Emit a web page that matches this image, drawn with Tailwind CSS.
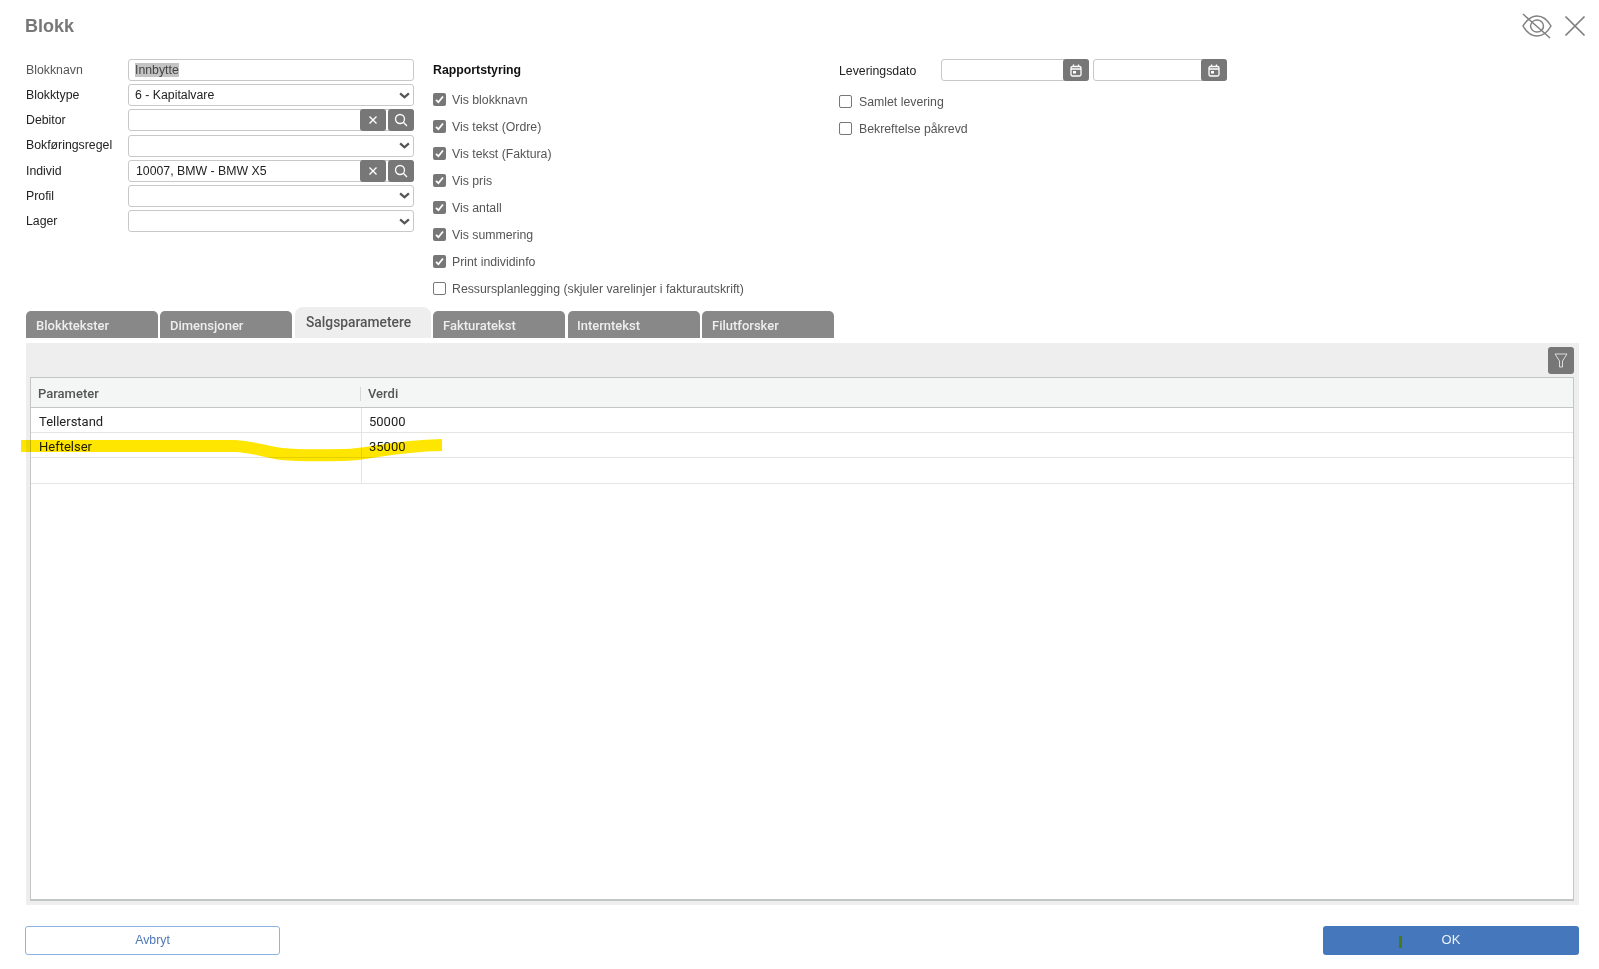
<!DOCTYPE html>
<html lang="no">
<head>
<meta charset="utf-8">
<title>Blokk</title>
<script src="https://cdn.jsdelivr.net/npm/@tailwindcss/browser@4"></script>
</head>
<body class="bg-white">
<div class="relative w-[1599px] h-[969px] overflow-hidden bg-white font-['Liberation_Sans',Arial,sans-serif] text-[12.3px] text-[#333]">

  <!-- Title bar -->
  <div class="h-[59px] pl-[25px] pr-[13px] flex items-start justify-between">
    <h1 class="mt-[15px] text-[18px] leading-[22px] font-bold text-[#777]">Blokk</h1>
    <div class="flex items-center gap-[11px] mt-[13px]">
      <svg class="w-[32px] h-[26px]" viewBox="0 0 32 26" fill="none" stroke="#808080" stroke-width="1.5">
        <path d="M2 13 C7 5 12 3 16 3 C21 3 26 6 30 13 C26 20 21 23 16 23 C11 23 6 20 2 13 Z"/>
        <path d="M9.5 13 C10 9 13 7 16 7 C19.5 7 22.5 9.5 22.5 13 C22.5 16.5 19.5 19 16 19 C13 19 10 17 9.5 13 Z"/>
        <path d="M2 1 L29 25"/>
      </svg>
      <svg class="w-[22px] h-[22px]" viewBox="0 0 22 22" fill="none" stroke="#7d7d7d" stroke-width="1.7">
        <path d="M1.500 1.500 L20.500 20.500 M20.500 1.500 L1.500 20.500"/>
      </svg>
    </div>
  </div>

  <!-- Form -->
  <div class="h-[248px] pl-[26px] flex items-start">
    <div class="w-[388px] flex flex-col gap-[3.2px]">
      <div class="flex items-center h-[22px]">
        <label class="w-[102px] text-[#555]">Blokknavn</label>
        <div class="flex-1 h-[22px] border border-[#c8c8c8] rounded-[3px] flex items-center pl-[6px]"><span class="bg-[#c4c4c4] text-[#444] leading-[14px]">Innbytte</span></div>
      </div>
      <div class="flex items-center h-[22px]">
        <label class="w-[102px] text-[#222]">Blokktype</label>
        <div class="flex-1 h-[22px] border border-[#c8c8c8] rounded-[3px] flex items-center justify-between pl-[6px] pr-[3px] text-[#222]"><span>6 - Kapitalvare</span>
          <svg class="w-[11px] h-[7px]" viewBox="0 0 12 8" fill="none" stroke="#555" stroke-width="2.6"><path d="M1 1.500 L6 6 L11 1.500"/></svg></div>
      </div>
      <div class="flex items-center h-[22px]">
        <label class="w-[102px] text-[#222]">Debitor</label>
        <div class="flex-1 h-[22px] border border-[#c8c8c8] rounded-[3px] flex justify-end gap-[2px]">
          <button class="w-[26px] h-[22px] -my-[1px] bg-[#777] rounded-[3px] flex items-center justify-center"><svg class="w-[10px] h-[10px]" viewBox="0 0 10 10" fill="none" stroke="#fff" stroke-width="1.4"><path d="M1.500 1.500 L8.500 8.500 M8.500 1.500 L1.500 8.500"/></svg></button>
          <button class="w-[26px] h-[22px] -my-[1px] -mr-[1px] bg-[#777] rounded-[3px] flex items-center justify-center"><svg class="w-[14px] h-[14px]" viewBox="0 0 14 14" fill="none" stroke="#fff" stroke-width="1.3"><circle cx="6" cy="6" r="4.500"/><path d="M9.300 9.300 L13 13"/></svg></button>
        </div>
      </div>
      <div class="flex items-center h-[22px]">
        <label class="w-[102px] text-[#222]">Bokføringsregel</label>
        <div class="flex-1 h-[22px] border border-[#c8c8c8] rounded-[3px] flex items-center justify-end pr-[3px]">
          <svg class="w-[11px] h-[7px]" viewBox="0 0 12 8" fill="none" stroke="#555" stroke-width="2.6"><path d="M1 1.500 L6 6 L11 1.500"/></svg></div>
      </div>
      <div class="flex items-center h-[22px]">
        <label class="w-[102px] text-[#222]">Individ</label>
        <div class="flex-1 h-[22px] border border-[#c8c8c8] rounded-[3px] flex items-center justify-between pl-[7px] text-[#222]">
          <span>10007, BMW - BMW X5</span>
          <div class="flex gap-[2px]">
            <button class="w-[26px] h-[22px] -my-[1px] bg-[#777] rounded-[3px] flex items-center justify-center"><svg class="w-[10px] h-[10px]" viewBox="0 0 10 10" fill="none" stroke="#fff" stroke-width="1.4"><path d="M1.500 1.500 L8.500 8.500 M8.500 1.500 L1.500 8.500"/></svg></button>
            <button class="w-[26px] h-[22px] -my-[1px] -mr-[1px] bg-[#777] rounded-[3px] flex items-center justify-center"><svg class="w-[14px] h-[14px]" viewBox="0 0 14 14" fill="none" stroke="#fff" stroke-width="1.3"><circle cx="6" cy="6" r="4.500"/><path d="M9.300 9.300 L13 13"/></svg></button>
          </div>
        </div>
      </div>
      <div class="flex items-center h-[22px]">
        <label class="w-[102px] text-[#222]">Profil</label>
        <div class="flex-1 h-[22px] border border-[#c8c8c8] rounded-[3px] flex items-center justify-end pr-[3px]">
          <svg class="w-[11px] h-[7px]" viewBox="0 0 12 8" fill="none" stroke="#555" stroke-width="2.6"><path d="M1 1.500 L6 6 L11 1.500"/></svg></div>
      </div>
      <div class="flex items-center h-[22px]">
        <label class="w-[102px] text-[#222]">Lager</label>
        <div class="flex-1 h-[22px] border border-[#c8c8c8] rounded-[3px] flex items-center justify-end pr-[3px]">
          <svg class="w-[11px] h-[7px]" viewBox="0 0 12 8" fill="none" stroke="#555" stroke-width="2.6"><path d="M1 1.500 L6 6 L11 1.500"/></svg></div>
      </div>
    </div>

    <div class="ml-[19px] w-[406px] flex flex-col text-[#555]">
      <div class="h-[26px] flex items-center font-bold text-[#111] -mt-[2px] mb-[3px]">Rapportstyring</div>
      <div class="flex flex-col">
        <div class="h-[27px] flex items-center gap-[6px] pt-[1px]"><span class="w-[13px] h-[13px] -mt-[2px] bg-[#777] rounded-[2px] flex items-center justify-center"><svg class="w-[9px] h-[9px]" viewBox="0 0 9 9" fill="none" stroke="#fff" stroke-width="1.8"><path d="M1 4.800 L3.400 7.200 L8 1.500"/></svg></span>Vis blokknavn</div>
        <div class="h-[27px] flex items-center gap-[6px] pt-[1px]"><span class="w-[13px] h-[13px] -mt-[2px] bg-[#777] rounded-[2px] flex items-center justify-center"><svg class="w-[9px] h-[9px]" viewBox="0 0 9 9" fill="none" stroke="#fff" stroke-width="1.8"><path d="M1 4.800 L3.400 7.200 L8 1.500"/></svg></span>Vis tekst (Ordre)</div>
        <div class="h-[27px] flex items-center gap-[6px] pt-[1px]"><span class="w-[13px] h-[13px] -mt-[2px] bg-[#777] rounded-[2px] flex items-center justify-center"><svg class="w-[9px] h-[9px]" viewBox="0 0 9 9" fill="none" stroke="#fff" stroke-width="1.8"><path d="M1 4.800 L3.400 7.200 L8 1.500"/></svg></span>Vis tekst (Faktura)</div>
        <div class="h-[27px] flex items-center gap-[6px] pt-[1px]"><span class="w-[13px] h-[13px] -mt-[2px] bg-[#777] rounded-[2px] flex items-center justify-center"><svg class="w-[9px] h-[9px]" viewBox="0 0 9 9" fill="none" stroke="#fff" stroke-width="1.8"><path d="M1 4.800 L3.400 7.200 L8 1.500"/></svg></span>Vis pris</div>
        <div class="h-[27px] flex items-center gap-[6px] pt-[1px]"><span class="w-[13px] h-[13px] -mt-[2px] bg-[#777] rounded-[2px] flex items-center justify-center"><svg class="w-[9px] h-[9px]" viewBox="0 0 9 9" fill="none" stroke="#fff" stroke-width="1.8"><path d="M1 4.800 L3.400 7.200 L8 1.500"/></svg></span>Vis antall</div>
        <div class="h-[27px] flex items-center gap-[6px] pt-[1px]"><span class="w-[13px] h-[13px] -mt-[2px] bg-[#777] rounded-[2px] flex items-center justify-center"><svg class="w-[9px] h-[9px]" viewBox="0 0 9 9" fill="none" stroke="#fff" stroke-width="1.8"><path d="M1 4.800 L3.400 7.200 L8 1.500"/></svg></span>Vis summering</div>
        <div class="h-[27px] flex items-center gap-[6px] pt-[1px]"><span class="w-[13px] h-[13px] -mt-[2px] bg-[#777] rounded-[2px] flex items-center justify-center"><svg class="w-[9px] h-[9px]" viewBox="0 0 9 9" fill="none" stroke="#fff" stroke-width="1.8"><path d="M1 4.800 L3.400 7.200 L8 1.500"/></svg></span>Print individinfo</div>
        <div class="h-[27px] flex items-center gap-[6px] pt-[1px]"><span class="w-[13px] h-[13px] -mt-[2px] border border-[#777] rounded-[2px]"></span>Ressursplanlegging (skjuler varelinjer i fakturautskrift)</div>
      </div>
    </div>

    <div class="flex flex-col text-[#555]">
      <div class="flex items-center h-[22px]">
        <label class="w-[102px] text-[#222] pt-[2px]">Leveringsdato</label>
        <div class="w-[148px] h-[22px] border border-[#c8c8c8] rounded-[3px] flex justify-end">
          <button class="w-[26px] h-[22px] -m-[1px] bg-[#777] rounded-[3px] flex items-center justify-center"><svg class="w-[12px] h-[13px]" viewBox="0 0 12 13" fill="none" stroke="#fff" stroke-width="1.3"><rect x="1" y="2.500" width="10" height="9.500" rx="1.500"/><path d="M1 5 H11 M3.500 0.500 V3 M8.500 0.500 V3"/><rect x="3" y="7" width="3" height="2.500" fill="#fff" stroke="none"/></svg></button>
        </div>
        <div class="ml-[4px] w-[134px] h-[22px] border border-[#c8c8c8] rounded-[3px] flex justify-end">
          <button class="w-[26px] h-[22px] -m-[1px] bg-[#777] rounded-[3px] flex items-center justify-center"><svg class="w-[12px] h-[13px]" viewBox="0 0 12 13" fill="none" stroke="#fff" stroke-width="1.3"><rect x="1" y="2.500" width="10" height="9.500" rx="1.500"/><path d="M1 5 H11 M3.500 0.500 V3 M8.500 0.500 V3"/><rect x="3" y="7" width="3" height="2.500" fill="#fff" stroke="none"/></svg></button>
        </div>
      </div>
      <div class="h-[27px] flex items-center gap-[7px] mt-[7px] pt-[1px]"><span class="w-[13px] h-[13px] -mt-[2px] border border-[#777] rounded-[2px]"></span>Samlet levering</div>
      <div class="h-[27px] flex items-center gap-[7px] pt-[1px]"><span class="w-[13px] h-[13px] -mt-[2px] border border-[#777] rounded-[2px]"></span>Bekreftelse påkrevd</div>
    </div>
  </div>

  <!-- Tabs -->
  <div class="h-[31px] pl-[26px] flex items-end font-['Roboto',sans-serif] text-[13px] font-medium text-[#eee]">
    <div class="w-[132px] h-[27px] bg-[#888] rounded-t-[5px] flex items-center pl-[10px] pt-[2px]">Blokktekster</div>
    <div class="ml-[2px] w-[132px] h-[27px] bg-[#888] rounded-t-[5px] flex items-center pl-[10px] pt-[2px]">Dimensjoner</div>
    <div class="ml-[3px] w-[136px] h-[31px] bg-[#eee] rounded-t-[8px] flex items-start pt-[5px] pl-[11px] text-[#555] text-[13.8px]">Salgsparametere</div>
    <div class="ml-[2px] w-[132px] h-[27px] bg-[#888] rounded-t-[5px] flex items-center pl-[10px] pt-[2px]">Fakturatekst</div>
    <div class="ml-[3px] w-[132px] h-[27px] bg-[#888] rounded-t-[5px] flex items-center pl-[9px] pt-[2px]">Interntekst</div>
    <div class="ml-[2px] w-[132px] h-[27px] bg-[#888] rounded-t-[5px] flex items-center pl-[10px] pt-[2px]">Filutforsker</div>
  </div>

  <!-- Panel -->
  <div class="mt-[5px] ml-[26px] w-[1553px] h-[562px] bg-[#eee] pl-[4px] pr-[5px] pb-[4px] flex flex-col">
    <div class="h-[34px] flex items-start justify-end pt-[4px] shrink-0">
      <button class="w-[26px] h-[27px] bg-[#777] rounded-[3px] flex items-center justify-center">
        <svg class="w-[14px] h-[15px]" viewBox="0 0 14 15" fill="none" stroke="#ddd" stroke-width="1"><path d="M1 1 H13 L8.500 8 V14 H5.500 V8 Z"/></svg>
      </button>
    </div>
    <div class="flex-1 bg-white border-2 border-[#c3c6c6] border-t border-l border-r flex flex-col font-['Roboto',sans-serif] text-[13px]">
      <div class="h-[30px] bg-[#f4f6f5] border-b border-[#c3c6c6] flex items-center font-medium text-[#555] shrink-0 pt-[2px]">
        <div class="w-[330px] pl-[7px] h-[14px] flex items-center border-r border-[#d8d8d8]">Parameter</div>
        <div class="pl-[7px]">Verdi</div>
      </div>
      <div class="h-[25px] border-b border-[#e4e6e6] flex text-[#222]">
        <div class="w-[331px] pl-[8px] pt-[4px] border-r border-[#e4e6e6] flex items-center">Tellerstand</div>
        <div class="pl-[7px] pt-[4px] flex items-center">50000</div>
      </div>
      <div class="h-[25px] border-b border-[#e4e6e6] flex text-[#222]">
        <div class="w-[331px] pl-[8px] pt-[4px] border-r border-[#e4e6e6] flex items-center">Heftelser</div>
        <div class="pl-[7px] pt-[4px] flex items-center">35000</div>
      </div>
      <div class="h-[26px] border-b border-[#e4e6e6] flex">
        <div class="w-[331px] border-r border-[#e4e6e6]"></div>
      </div>
    </div>
  </div>

  <!-- Footer -->
  <div class="mt-[21px] pl-[25px] pr-[20px] flex justify-between">
    <button class="w-[255px] h-[29px] border border-[#8fb2e6] rounded-[3px] text-[#4f78b8] bg-white pb-[1px]">Avbryt</button>
    <button class="w-[256px] h-[29px] bg-[#4577bc] rounded-[3px] text-[#eef2f9] text-[13px] relative pb-[2px]">OK<span class="absolute left-[76px] top-[10px] w-[3px] h-[12px] bg-[#4a7a10]"></span></button>
  </div>

  <!-- Yellow marker stroke drawn over the grid -->
  <svg class="absolute left-0 top-0 pointer-events-none mix-blend-multiply" width="1599" height="969" viewBox="0 0 1599 969" fill="none">
    <path d="M21 446 L235 446 C255 447 265 452 282 454 C300 456 320 455.500 345 455 C370 454.500 390 446 442 445" stroke="#ffe600" stroke-width="12"/>
  </svg>
</div>
</body>
</html>
